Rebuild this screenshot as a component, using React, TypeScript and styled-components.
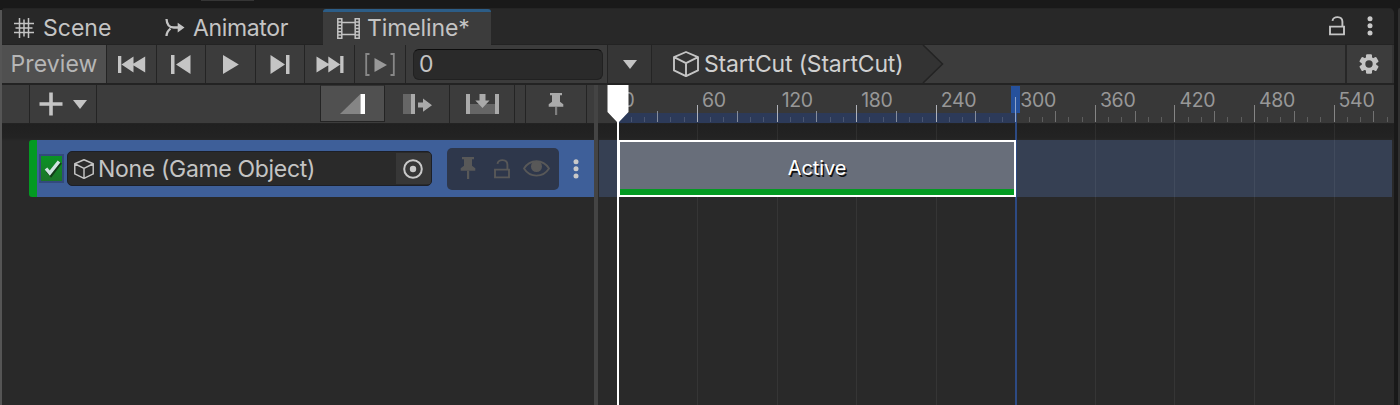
import React from 'react';
import styled, { createGlobalStyle } from 'styled-components';

const GlobalStyle = createGlobalStyle`
  * {
    box-sizing: border-box;
  }

  body {
    margin: 0;
    font-family: Inter, 'Liberation Sans', sans-serif;
    font-size: 23px;
    line-height: 28px;
    background-color: #191919;
    color: #c4c4c4;
    overflow: hidden;
  }

  svg {
    display: block;
    flex: none;
  }
`;

const PX_PER_STEP = 79.57;
const ORIGIN = 20;

const Screen = styled.div`
  display: flex;
  gap: 4px;
  height: 405px;
  padding-top: 8px;
  background:
    linear-gradient(#353535, #353535) 201px 0 / 53px 1px no-repeat,
    linear-gradient(90deg, #555 2px, #191919 2px) 0 10px no-repeat;
`;

const Window = styled.div`
  display: flex;
  flex: none;
  flex-direction: column;
  width: 1392px;
  margin-left: 2px;
  border-radius: 3px 5px 0 0;
  overflow: hidden;
  background: #282828;
`;

const NextWindow = styled.div`
  flex: 1;
  border-top-left-radius: 4px;
  background: #303030;
`;

const TabBar = styled.div`
  display: flex;
  flex: none;
  height: 37px;
  border-top: 1px solid #242424;
  border-bottom: 1px solid #232323;
`;

const Tab = styled.div<{ $width: number; $indent: number; $gap: number; $active?: boolean }>`
  display: flex;
  align-items: center;
  gap: ${(p) => p.$gap}px;
  width: ${(p) => p.$width}px;
  height: 36px;
  padding-left: ${(p) => p.$indent}px;
  padding-top: ${(p) => (p.$active ? 0 : 2)}px;
  padding-bottom: 1px;
  border-top: ${(p) => (p.$active ? '3px solid #2c5d87' : 'none')};
  border-radius: 3px 3px 0 0;
  background: ${(p) => (p.$active ? '#3c3c3c' : 'transparent')};
`;

const TabTools = styled.div`
  display: flex;
  align-items: center;
  gap: 22px;
  margin-left: auto;
  padding: 0 21px 2px 0;
`;

const Text = styled.span<{ $spacing?: number }>`
  letter-spacing: ${(p) => p.$spacing ?? 0}px;
  white-space: pre;
`;

const Toolbar = styled.div`
  display: flex;
  flex: none;
  height: 40px;
  background: #3c3c3c;
  border-bottom: 2px solid #232323;
`;

const ToolButton = styled.div<{ $width: number; $on?: boolean }>`
  display: flex;
  align-items: center;
  justify-content: center;
  width: ${(p) => p.$width}px;
  height: 100%;
  border-right: 1px solid #242424;
  background: ${(p) => (p.$on ? '#505050' : 'transparent')};
`;

const PreviewButton = styled(ToolButton)`
  color: #b6b6b6;
`;

const FrameField = styled.div`
  width: 190px;
  height: 31px;
  margin: 4px 4px 0 7px;
  padding-left: 5px;
  line-height: 29px;
  border: 1px solid #212121;
  border-top-color: #0d0d0d;
  border-radius: 6px;
  background: #2a2a2a;
`;

const FrameDropdown = styled(ToolButton)`
  background: #363636;
  border-left: 1px solid #242424;
`;

const Crumb = styled.div`
  position: relative;
  display: flex;
  align-items: center;
  width: 292px;
  padding-left: 21px;
  color: #d0d0d0;
`;

const CrumbShape = styled.svg`
  position: absolute;
  left: 0;
  top: 0;
`;

const CrumbContent = styled.div`
  position: relative;
  display: flex;
  align-items: center;
  gap: 5px;
`;

const GearButton = styled(ToolButton)`
  margin-left: auto;
  padding-right: 1px;
  border-left: 2px solid #272727;
  border-right: 2px solid #333;
`;

const Body = styled.div`
  display: flex;
  flex: 1;
`;

const Tracks = styled.div`
  flex: none;
  width: 592px;
`;

const Splitter = styled.div`
  flex: none;
  width: 4px;
  background: #444;
`;

const TrackTools = styled.div`
  display: flex;
  height: 39px;
  padding-left: 27px;
  background: #3c3c3c;
  border-bottom: 1px solid #232323;
`;

const AddButton = styled(ToolButton)`
  gap: 10px;
  border-left: 1px solid #242424;
`;

const EditModes = styled.div`
  display: flex;
  margin-left: 223px;
`;

const ModeButton = styled(ToolButton)`
  ${(p) =>
    p.$on &&
    `
    height: 37px;
    border: 1px solid #242424;
    border-top-color: #333;
  `}
`;

const TrackList = styled.div`
  padding: 16px 0 0 27px;
  height: 281px;
  background: linear-gradient(#202020, #232323 14px, #292929 17px);
`;

const Track = styled.div`
  display: flex;
  align-items: center;
  height: 57px;
  padding-right: 15px;
  border-left: 8px solid #039a22;
  border-radius: 3px 0 0 3px;
  background: #3e5f99;
`;

const CheckBox = styled.div`
  flex: none;
  width: 25px;
  height: 29px;
  margin-left: 2px;
  border: 2px solid #334a7c;
  background: linear-gradient(#0a9325, #1b7429);
`;

const ObjectField = styled.div`
  display: flex;
  flex: none;
  align-items: center;
  gap: 4px;
  width: 365px;
  height: 35px;
  margin-left: 3px;
  padding-left: 6px;
  border: 1px solid #1c1f27;
  border-radius: 5px;
  overflow: hidden;
  background: #2a2a2a;
`;

const PickerButton = styled.div`
  display: flex;
  align-items: center;
  justify-content: center;
  width: 35px;
  height: 31px;
  margin-left: auto;
  padding-right: 2px;
  background: #373737;
`;

const TrackFlags = styled.div`
  display: flex;
  flex: none;
  align-items: center;
  width: 112px;
  height: 42px;
  margin-left: 15px;
  margin-right: auto;
  padding-left: 13px;
  border-radius: 5px;
  background: #2e374b;
`;

const Timeline = styled.div`
  position: relative;
  flex: 1;
  min-width: 0;
  display: flex;
  flex-direction: column;
  background: #292929;
`;

const Ruler = styled.div`
  display: flex;
  height: 39px;
  padding: 1px 0 0 ${ORIGIN + 4.5}px;
  background: linear-gradient(90deg, #383838 ${ORIGIN}px, transparent ${ORIGIN}px 418px, #383838 418px),
    linear-gradient(#383838 28px, #2c3a59 28px);
  border-bottom: 1px solid #232323;
`;

const RulerLabel = styled.div`
  flex: none;
  width: ${PX_PER_STEP}px;
  font-size: 19.5px;
  letter-spacing: -0.3px;
  color: #979797;
`;

const Overlay = styled.svg`
  position: absolute;
  left: 0;
  top: 0;
`;

const Lane = styled.div`
  display: flex;
  flex: 1;
  align-items: flex-start;
  padding: 16px 2px 0 1px;
  background: linear-gradient(#202020, #232323 14px, #292929 17px);
`;

const LaneTrack = styled.div`
  width: 100%;
  height: 57px;
  padding-left: 19px;
  background: #364053;
`;

const Clip = styled.div`
  position: relative;
  z-index: 1;
  width: 398px;
  height: 57px;
  padding-top: 12px;
  border: 2px solid #fff;
  text-align: center;
  font-size: 20px;
  letter-spacing: -0.1px;
  color: #fff;
  text-shadow: 1.5px 1.5px 0 #111;
  background: linear-gradient(#686e7a 47px, #039a22 47px);
`;

const PlayheadShape = styled(Overlay)`
  left: 9px;
  z-index: 2;
`;

const LABELS = [0, 60, 120, 180, 240, 300, 360, 420, 480, 540];

const Triangle = ({ w = 14, h = 9 }: { w?: number; h?: number }) => (
  <svg width={w} height={h} viewBox="0 0 14 9">
    <path d="M0 0h14L7 9z" fill="#c4c4c4" />
  </svg>
);

const Dots = () => (
  <svg width="6" height="20" viewBox="0 0 6 20" fill="#c9c9c9">
    <circle cx="3" cy="2.7" r="2.5" />
    <circle cx="3" cy="9.8" r="2.5" />
    <circle cx="3" cy="16.9" r="2.5" />
  </svg>
);

const Cube = ({ size, color }: { size: number; color: string }) => (
  <svg width={size} height={size} viewBox="0 0 26 26" fill="none" stroke={color} strokeWidth="1.9" strokeLinejoin="round">
    <path d="M13 1l12 5.2v13.200L13 25.200 1 19.400V6.200zM1 6.200l12 6 12-6M13 12.200v13" />
  </svg>
);

const OpenLock = ({ color }: { color: string }) => (
  <svg width="16" height="20" viewBox="0 0 16 20" fill="none" stroke={color} strokeWidth="1.9">
    <path d="M1 10.600h14v7.800H1zM13.400 10.600V5.700c0-6-9.400-6-9.900-.9" />
  </svg>
);

const Pin = ({ color, fade = 1 }: { color: string; fade?: number }) => (
  <svg width="16" height="23" viewBox="0 0 16 23" fill={color}>
    <path d="M2 0h12v2.200h-2v6.600l3.300 2.400v2.500H.7v-2.500L4 8.800V2.200H2z" />
    <path d="M7 13.700h2.200V22H7z" opacity={fade} />
  </svg>
);

const SkipStart = () => (
  <svg width="28" height="17" viewBox="0 0 28 17" fill="#c4c4c4">
    <path d="M0 0h3.300v17H0zM15.500 .5v16L3.500 8.500zM27.200 .5v16L14 8.500z" />
  </svg>
);

const SkipEnd = () => (
  <svg width="28" height="17" viewBox="0 0 28 17" fill="#c4c4c4">
    <path d="M24.200 0h3.300v17h-3.300zM12.300 .5v16l12-8zM.5 .5v16l13.200-8z" />
  </svg>
);

const Ticks = () => {
  const ticks: React.ReactNode[] = [];
  for (let i = 1; i < 59; i++) {
    const x = Math.round(ORIGIN + (i * PX_PER_STEP) / 6 - 0.6);
    const inRange = i < 30;
    if (i % 6 === 0) {
      ticks.push(<rect key={i} x={x} y={20} width={1} height={17} fill={inRange ? '#aeb1b8' : '#858585'} />);
      if (i !== 30) ticks.push(<rect key={`g${i}`} x={x} y={39} width={1} height={282} fill="#fff" opacity={0.06} />);
    } else if (i % 3 === 0) {
      ticks.push(<rect key={i} x={x} y={26} width={1} height={11} fill={inRange ? '#868d9b' : '#727272'} />);
    } else {
      ticks.push(<rect key={i} x={x} y={32} width={1} height={5} fill={inRange ? '#4a5671' : '#5d5d5d'} />);
    }
  }
  return <>{ticks}</>;
};

const Playhead = () => (
  <PlayheadShape width="22" height="321" viewBox="0 0 22 321" fill="#fff">
    <path d="M.5 0h21v27L12 37v284h-2V37L.5 27z" />
  </PlayheadShape>
);

const App: React.FC = () => {
  return (
    <>
      <GlobalStyle />
      <Screen>
        <Window>
          <TabBar>
            <Tab $width={146} $indent={12} $gap={9}>
              <svg width="20" height="20" viewBox="0 0 20 20" stroke="#c4c4c4">
                <path d="M5.500 0v20M14.500 0v20M10 1.500v17M0 5.500h20M0 14.500h20M1.500 10h17" strokeWidth="1.500" />
              </svg>
              <Text>Scene</Text>
            </Tab>
            <Tab $width={175} $indent={17} $gap={8}>
              <svg width="20" height="18" viewBox="0 0 20 18" fill="none" stroke="#c4c4c4" strokeWidth="2.300">
                <path d="M1.500 0c.3 5.500 3 8.500 7.300 8.500H15M1.500 17c.2-2.800 1-5.200 4-7.400" />
                <path d="M12.700 3.800l6.800 4.800-6.800 4.900z" fill="#c4c4c4" stroke="none" />
              </svg>
              <Text $spacing={-0.35}>Animator</Text>
            </Tab>
            <Tab $width={168} $indent={14} $gap={7} $active>
              <svg width="23" height="21" viewBox="0 0 23 21" fill="none" stroke="#c4c4c4" strokeWidth="1.500">
                <path d="M.8.8h4v19.400h-4zM18.200.8h4v19.400h-4zM5 4.600h13M5 16.400h13" />
                <path d="M1 4h3.500M1 7.300h3.500M1 10.500h3.500M1 13.700h3.500M1 17h3.500M18.500 4H22M18.500 7.300H22M18.500 10.500H22M18.500 13.700H22M18.500 17H22" />
              </svg>
              <Text $spacing={-0.1}>Timeline*</Text>
            </Tab>
            <TabTools>
              <OpenLock color="#c4c4c4" />
              <Dots />
            </TabTools>
          </TabBar>

          <Toolbar>
            <PreviewButton $width={105} $on>
              <Text $spacing={0.1}>Preview</Text>
            </PreviewButton>
            <ToolButton $width={50}>
              <SkipStart />
            </ToolButton>
            <ToolButton $width={49}>
              <svg width="20" height="19" viewBox="0 0 20 19" fill="#c4c4c4">
                <path d="M0 0h3.500v19H0zM19.500 0v19L5 9.500z" />
              </svg>
            </ToolButton>
            <ToolButton $width={50}>
              <svg width="16" height="19" viewBox="0 0 16 19" fill="#c4c4c4">
                <path d="M0 0v19l15.800-9.500z" />
              </svg>
            </ToolButton>
            <ToolButton $width={49}>
              <svg width="20" height="19" viewBox="0 0 20 19" fill="#c4c4c4">
                <path d="M16 0h3.500v19H16zM.5 0v19L15 9.500z" />
              </svg>
            </ToolButton>
            <ToolButton $width={50}>
              <SkipEnd />
            </ToolButton>
            <ToolButton $width={51}>
              <svg width="30" height="23" viewBox="0 0 30 23">
                <path d="M4.500 1H1.200v21h3.300M25.500 1h3.300v21h-3.300" fill="none" stroke="#888" strokeWidth="1.800" />
                <path d="M9.500 5v14l12.500-7z" fill="#999" />
              </svg>
            </ToolButton>
            <FrameField>0</FrameField>
            <FrameDropdown $width={45}>
              <Triangle />
            </FrameDropdown>
            <Crumb>
              <CrumbShape width="292" height="38" viewBox="0 0 292 38">
                <path d="M0 0h271l19.500 19L271 38H0z" fill="#333" />
                <path d="M271 0l19.500 19L271 38" fill="none" stroke="#232323" strokeWidth="1.500" />
              </CrumbShape>
              <CrumbContent>
                <Cube size={26} color="#c4c4c4" />
                <Text $spacing={-0.18}>StartCut (StartCut)</Text>
              </CrumbContent>
            </Crumb>
            <GearButton $width={49}>
              <svg width="20" height="20" viewBox="0 0 20 20">
                <g fill="#c4c4c4">
                  <rect x="7" y="0.300" width="6" height="19.400" rx="1.200" />
                  <rect x="7" y="0.300" width="6" height="19.400" rx="1.200" transform="rotate(60 10 10)" />
                  <rect x="7" y="0.300" width="6" height="19.400" rx="1.200" transform="rotate(120 10 10)" />
                  <circle cx="10" cy="10" r="7.300" />
                </g>
                <circle cx="10" cy="10" r="3.700" fill="#3c3c3c" />
              </svg>
            </GearButton>
          </Toolbar>

          <Body>
            <Tracks>
              <TrackTools>
                <AddButton $width={68}>
                  <svg width="24" height="24" viewBox="0 0 24 24" stroke="#c4c4c4" strokeWidth="3.600">
                    <path d="M12 .5v23M.5 12h23" />
                  </svg>
                  <Triangle />
                </AddButton>
                <EditModes>
                  <ModeButton $width={65} $on>
                    <svg width="26" height="20" viewBox="0 0 26 20">
                      <path d="M0 20L20.500 0v20z" fill="#858585" />
                      <path d="M20.500 0H25v20h-4.500z" fill="#fff" />
                    </svg>
                  </ModeButton>
                  <ModeButton $width={65}>
                    <svg width="29" height="20" viewBox="0 0 29 20">
                      <path d="M0 0h8v20H0z" fill="#666" />
                      <path d="M8 0h4v20H8z" fill="#aaa" />
                      <path d="M15 8.500h5v-4l9 6.700-9 6.600v-4.300h-5z" fill="#aaa" />
                    </svg>
                  </ModeButton>
                  <ModeButton $width={65}>
                    <svg width="33" height="20" viewBox="0 0 33 20">
                      <path d="M4 10h25v10H4z" fill="#666" />
                      <path d="M0 0h4v20H0zM29 0h4v20h-4zM13.500 0h6v6.500h4L16.500 14l-7.200-7.500h4.200z" fill="#aaa" />
                    </svg>
                  </ModeButton>
                  <ToolButton $width={11} />
                  <ToolButton $width={61}>
                    <Pin color="#aaa" fade={0.6} />
                  </ToolButton>
                </EditModes>
              </TrackTools>
              <TrackList>
                <Track>
                  <CheckBox>
                    <svg width="21" height="25" viewBox="0 0 21 25" fill="none" strokeWidth="3.400">
                      <path d="M6 14.500l4 4.500L19.500 6.500" stroke="#133d1a" />
                      <path d="M5 12.500l3.800 4.500L18 5.500" stroke="#d0e4e2" />
                    </svg>
                  </CheckBox>
                  <ObjectField>
                    <Cube size={20} color="#c4c4c4" />
                    <Text $spacing={-0.32}>None (Game Object)</Text>
                    <PickerButton>
                      <svg width="20" height="20" viewBox="0 0 20 20">
                        <circle cx="10" cy="10" r="8.800" fill="none" stroke="#c9c9c9" strokeWidth="2" />
                        <circle cx="10" cy="10" r="3.200" fill="#c9c9c9" />
                      </svg>
                    </PickerButton>
                  </ObjectField>
                  <TrackFlags>
                    <Pin color="#585858" />
                    <svg width="18" height="1" />
                    <OpenLock color="#585858" />
                    <svg width="13" height="1" />
                    <svg width="27" height="17" viewBox="0 0 27 17">
                      <path d="M1 8.500C7-1.200 20-1.200 26 8.500 20 18 7 18 1 8.500z" fill="none" stroke="#585858" strokeWidth="1.800" />
                      <circle cx="13.500" cy="6.500" r="5.500" fill="#585858" />
                    </svg>
                  </TrackFlags>
                  <Dots />
                </Track>
              </TrackList>
            </Tracks>
            <Splitter />
            <Timeline>
              <Ruler>
                {LABELS.map((n) => (
                  <RulerLabel key={n}>{n}</RulerLabel>
                ))}
              </Ruler>
              <Lane>
                <LaneTrack>
                  <Clip>Active</Clip>
                </LaneTrack>
              </Lane>
              <Overlay width="796" height="321" viewBox="0 0 796 321">
                <rect x="413" y="1" width="9" height="27" fill="#26519c" />
                <Ticks />
                <rect x="417" y="28" width="2" height="293" fill="#2d4a83" />
                <rect x="417" y="12" width="1" height="25" fill="#8da3cb" />
              </Overlay>
              <Playhead />
            </Timeline>
          </Body>
        </Window>
        <NextWindow />
      </Screen>
    </>
  );
};

export default App;
